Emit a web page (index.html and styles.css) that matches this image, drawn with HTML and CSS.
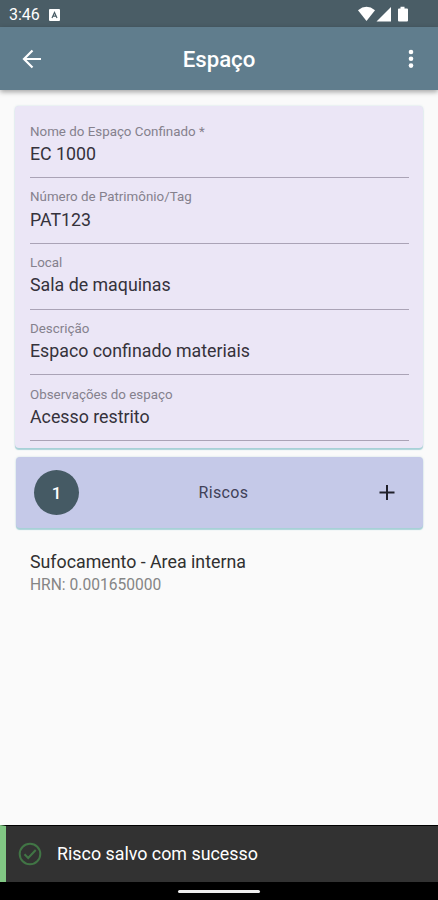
FILE: index.html
```html
<!DOCTYPE html>
<html lang="pt-BR">
<head>
<meta charset="utf-8">
<title>Espaço</title>
<link rel="stylesheet" href="styles.css">
</head>
<body>
<div class="screen">
  <div class="status">
    <span class="clock">3:46</span>
    <svg class="notice" width="11" height="12" viewBox="0 0 11 12"><rect width="11" height="12" rx="1" fill="#fff"/><path d="M3 9 5.5 3.5 8 9M4 7.2h3" fill="none" stroke="#4a5d66" stroke-width="1.2"/></svg>
    <svg class="signals" width="52" height="17" viewBox="0 0 52 17" fill="#fff"><path d="M0 4.2Q8.5-2.7 17 4.2L8.5 15Z"/><path d="M18.5 15.5H33V1Z"/><path d="M40 2.5h2.5V.7h4v1.8H49q1 0 1 1V14.500q0 1-1 1H41q-1 0-1-1V3.500q0-1 1-1Z"/></svg>
  </div>
  <header class="appbar">
    <svg width="20" height="20" viewBox="0 0 20 20" fill="none" stroke="#fff" stroke-width="2.200"><path d="M19 10H2.500M10.500 1.500 2 10l8.500 8.500"/></svg>
    <h1 class="title">Espaço</h1>
    <svg class="more" width="6" height="20" viewBox="0 0 6 20" fill="#fff"><circle cx="3" cy="3" r="2.300"/><circle cx="3" cy="9.800" r="2.300"/><circle cx="3" cy="16.600" r="2.300"/></svg>
  </header>
  <main class="content">
    <section class="card form">
      <div class="field"><span class="label">Nome do Espaço Confinado *</span><span class="value">EC 1000</span></div>
      <div class="field"><span class="label">Número de Patrimônio/Tag</span><span class="value">PAT123</span></div>
      <div class="field"><span class="label">Local</span><span class="value">Sala de maquinas</span></div>
      <div class="field"><span class="label">Descrição</span><span class="value">Espaco confinado materiais</span></div>
      <div class="field"><span class="label">Observações do espaço</span><span class="value">Acesso restrito</span></div>
    </section>
    <section class="card risks">
      <span class="count">1</span>
      <span class="risks-title">Riscos</span>
      <svg width="16" height="16" viewBox="0 0 16 16" stroke="#20202a" stroke-width="2"><path d="M.5 7.500h15M8 0v15"/></svg>
    </section>
    <div class="item">
      <span class="item-title">Sufocamento - Area interna</span>
      <span class="item-sub">HRN: 0.001650000</span>
    </div>
  </main>
  <div class="snackbar">
    <svg width="24" height="24" viewBox="0 0 24 24" fill="none" stroke="#417545" stroke-width="2"><circle cx="12" cy="12" r="10.300"/><path d="m6.500 12.300 3.700 3.700 7.500-8"/></svg>
    <span class="message">Risco salvo com sucesso</span>
  </div>
  <div class="navbar"><span class="handle"></span></div>
</div>
</body>
</html>
```
FILE: styles.css
```css
* { box-sizing: border-box; }
body { margin: 0; font-family: Roboto, "Liberation Sans", sans-serif; background: #fafafa; }
svg { display: block; flex: none; }
span { white-space: nowrap; }
.screen { width: 438px; height: 900px; display: flex; flex-direction: column; overflow: hidden; }
.status { flex: none; height: 27px; background: #4a5d66; display: flex; align-items: center; padding: 2px 28px 0 9px; }
.clock { color: #fff; font-size: 16px; line-height: 24px; width: 40px; }
.signals { margin-left: auto; }
.appbar { flex: none; height: 63px; background: #607d8d; display: grid; grid-template-columns: 20px 1fr 6px; align-items: center; padding: 0 24px 0 22px; box-shadow: 0 2px 5px rgba(0,0,0,.35); }
.title { margin: 0; color: #fff; font-size: 22.200px; line-height: 30px; font-weight: 500; text-align: center; padding-right: 12px; }
.content { flex: 1; padding: 16px 15px 0; }
.card { border-radius: 4px; box-shadow: 0 2px 1px rgba(130,190,200,.65), 0 0 2px rgba(150,195,205,.5); }
.form { height: 342px; background: #ebe6f6; padding: 6.200px 14px 0 15px; }
.field { height: 65.800px; border-bottom: 1px solid #aaa3b6; display: flex; flex-direction: column; padding-top: 10.400px; }
.label { font-size: 13.350px; line-height: 18px; color: #85818d; }
.value { font-size: 17.800px; line-height: 24px; color: #35323b; margin-top: 1.200px; }
.risks { height: 71px; margin: 9px 0 0 1px; background: #c5c9e8; display: grid; grid-template-columns: 45px 1fr 16px; align-items: center; padding: 0 28px 0 18px; }
.count { width: 45px; height: 45px; border-radius: 50%; background: #455a64; color: #fff; display: flex; align-items: center; justify-content: center; font-size: 17px; font-weight: 500; }
.risks-title { font-size: 16px; letter-spacing: .35px; color: #414158; text-align: center; padding-right: 11px; }
.item { display: flex; flex-direction: column; padding: 22px 0 0 15px; }
.item-title { font-size: 17.800px; line-height: 24px; color: #303030; }
.item-sub { font-size: 15.600px; line-height: 22px; color: #858585; }
.snackbar { flex: none; height: 57px; background: #323232; border-top: 1px solid #000; border-left: 6px solid #81c784; display: flex; align-items: center; padding-left: 12px; gap: 15px; }
.message { color: #fff; font-size: 17.850px; line-height: 24px; }
.navbar { flex: none; height: 18px; background: #000; display: flex; justify-content: center; padding-top: 8px; }
.handle { width: 82px; height: 3px; border-radius: 2px; background: #eee; }
```
